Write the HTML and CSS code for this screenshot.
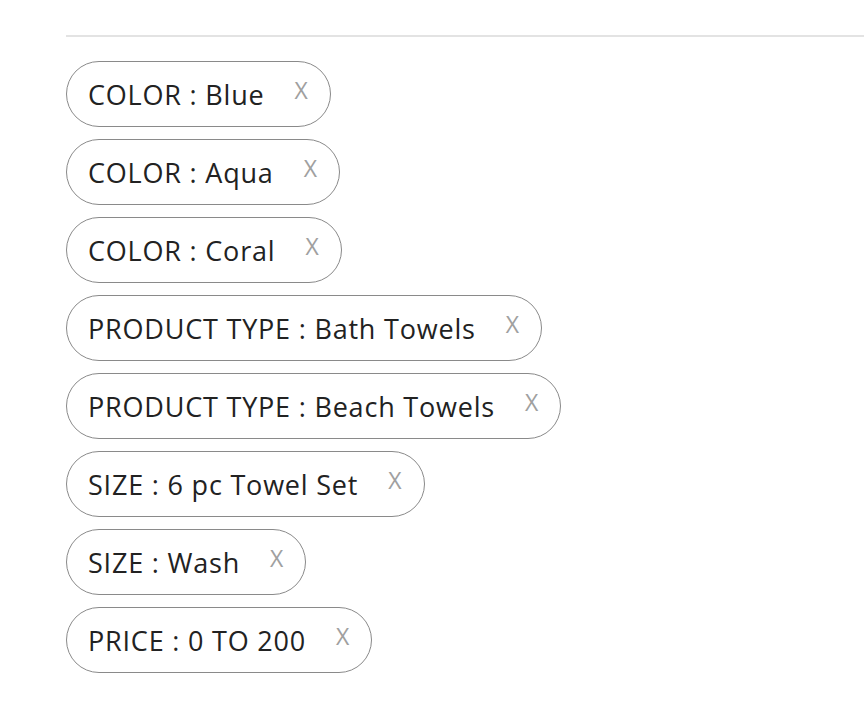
FILE: index.html
```html
<!DOCTYPE html>
<html>
<head>
<meta charset="utf-8">
<link rel="stylesheet" href="styles.css">
</head>
<body>
<div class="page">
  <div class="rule"></div>
  <ul class="filters">
    <li class="chip"><span class="label">COLOR : Blue</span><span class="close">X</span></li>
    <li class="chip"><span class="label">COLOR : Aqua</span><span class="close">X</span></li>
    <li class="chip"><span class="label">COLOR : Coral</span><span class="close">X</span></li>
    <li class="chip"><span class="label">PRODUCT TYPE : Bath Towels</span><span class="close">X</span></li>
    <li class="chip"><span class="label">PRODUCT TYPE : Beach Towels</span><span class="close">X</span></li>
    <li class="chip"><span class="label">SIZE : 6 pc Towel Set</span><span class="close">X</span></li>
    <li class="chip"><span class="label">SIZE : Wash</span><span class="close">X</span></li>
    <li class="chip"><span class="label">PRICE : 0 TO 200</span><span class="close">X</span></li>
  </ul>
</div>
</body>
</html>
```
FILE: styles.css
```css
html, body {
  margin: 0;
  padding: 0;
  background: #ffffff;
}
.page {
  padding: 35px 0 0 66px;
  font-family: "Open Sans", "Liberation Sans", sans-serif;
}
.rule {
  height: 2px;
  background: #e3e3e3;
}
.filters {
  list-style: none;
  margin: 24px 0 0 0;
  padding: 0;
  display: flex;
  flex-direction: column;
  align-items: flex-start;
  gap: 12px;
}
.chip {
  display: flex;
  align-items: center;
  height: 64px;
  padding: 0 22px 0 21px;
  border: 1px solid #8a8a8a;
  border-radius: 33px;
  color: #222222;
}
.label {
  font-size: 27px;
  letter-spacing: 0.8px;
}
.close {
  margin-left: 30px;
  font-size: 23px;
  font-weight: 400;
  color: #a0a0a0;
  margin-bottom: 9px;
}
```
